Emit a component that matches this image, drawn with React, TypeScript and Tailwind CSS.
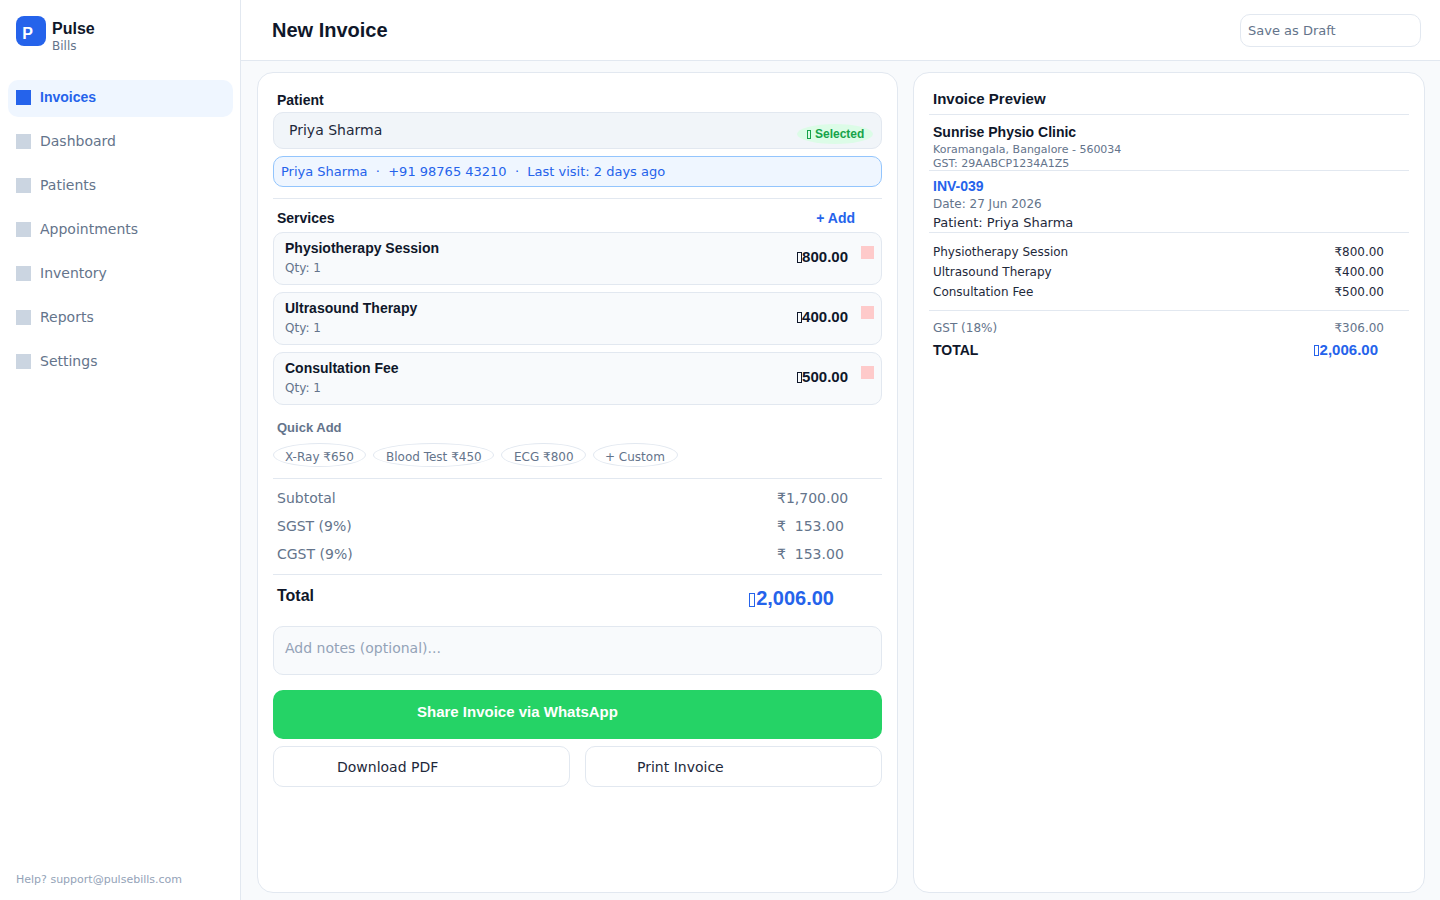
const dejavu = "font-['DejaVu_Sans',sans-serif]";
const strong = "font-['Liberation_Sans',sans-serif] font-bold";

const navItems = ["Invoices", "Dashboard", "Patients", "Appointments", "Inventory", "Reports", "Settings"];
const services = [
  { name: "Physiotherapy Session", price: "800.00" },
  { name: "Ultrasound Therapy", price: "400.00" },
  { name: "Consultation Fee", price: "500.00" },
];
const chips = [
  { label: "X-Ray ₹650", w: "w-[93px] pl-[11px]" },
  { label: "Blood Test ₹450", w: "w-[121px] pl-[12px]" },
  { label: "ECG ₹800", w: "w-[85px] pl-[12px]" },
  { label: "+ Custom", w: "w-[85px] pl-[11px]" },
];
const taxes = [
  { label: "Subtotal", value: "₹1,700.00" },
  { label: "SGST (9%)", value: "₹  153.00" },
  { label: "CGST (9%)", value: "₹  153.00" },
];

// the bold face has no rupee glyph in the reference, it shows an empty box
function MissingGlyph({ className }: { className: string }) {
  return <span role="img" aria-label="₹" className={`inline-block border border-current ${className}`} />;
}

function Sidebar() {
  return (
    <aside className="w-[241px] shrink-0 h-[900px] bg-white border-r border-[#e2e8f0] flex flex-col">
      <div className="flex gap-[6px] pl-4 pt-4 h-[80px]">
        <div className="w-[30px] h-[30px] rounded-lg bg-[#2563eb] flex items-center justify-center pt-[5px] pr-[7px]">
          <span className={`${strong} text-white text-[16px] leading-none`}>P</span>
        </div>
        <div className="flex flex-col">
          <span className={`${strong} text-[16px] leading-[20px] mt-[3px] text-[#0f172a]`}>Pulse</span>
          <span className="text-[12px] leading-[14px] text-[#64748b] mt-0">Bills</span>
        </div>
      </div>
      <nav className="flex flex-col gap-[7px] pl-2 pr-[7px]">
        {navItems.map((item, i) => (
          <div
            key={item}
            className={`h-[37px] flex items-center gap-[9px] px-2 pb-[2px] rounded-[10px] ${i === 0 ? "bg-[#eff6ff]" : ""}`}
          >
            <div className={`w-[15px] h-[15px] ${i === 0 ? "bg-[#2563eb]" : "bg-[#cbd5e1]"}`} />
            <span className={i === 0 ? `${strong} text-[14px] text-[#2563eb]` : "text-[14px] text-[#64748b]"}>{item}</span>
          </div>
        ))}
      </nav>
      <div className="mt-auto pl-4 pb-[12px] text-[11px] leading-[16px] text-[#94a3b8]">Help? support@pulsebills.com</div>
    </aside>
  );
}

function Header() {
  return (
    <header className="h-[61px] shrink-0 bg-white border-b border-[#e2e8f0] flex items-center justify-between pl-[31px] pr-[19px]">
      <h1 className={`${strong} text-[20px] text-[#0f172a]`}>New Invoice</h1>
      <div className="w-[181px] h-[33px] rounded-[10px] border border-[#e2e8f0] bg-white flex items-center pl-[7px] pt-px text-[13px] text-[#64748b]">
        Save as Draft
      </div>
    </header>
  );
}

function ServiceRow({ name, price }: { name: string; price: string }) {
  return (
    <div className="h-[53px] rounded-[10px] border border-[#e2e8f0] bg-[#f8fafc] flex justify-between pl-[11px] pr-[7px]">
      <div className="flex flex-col">
        <span className={`${strong} text-[14px] leading-[20px] mt-[5px] text-[#0f172a]`}>{name}</span>
        <span className="text-[12px] leading-[16px] mt-[2px] text-[#64748b]">Qty: 1</span>
      </div>
      <div className="flex items-start gap-[13px]">
        <span className={`${strong} text-[15px] leading-[20px] mt-[14px] text-[#0f172a]`}>
          <MissingGlyph className="w-[5px] h-[11px] align-[-1px]" />
          {price}
        </span>
        <div className="w-[13px] h-[13px] mt-[13px] bg-[#fecaca]" />
      </div>
    </div>
  );
}

function InvoiceForm() {
  return (
    <section className="w-[641px] h-[821px] shrink-0 bg-white rounded-2xl border border-[#e2e8f0] pl-[15px] pr-[15px] flex flex-col">
      <div className={`${strong} text-[14px] leading-[20px] mt-[17px] pl-1 text-[#0f172a]`}>Patient</div>
      <div className="relative h-[37px] mt-[2px] rounded-[10px] border border-[#e2e8f0] bg-[#f1f5f9] pl-[15px] text-[14px] leading-[35px] text-[#1e293b]">
        Priya Sharma
        <span className={`${strong} absolute right-2 top-[11px] w-[76px] h-[20px] rounded-[50%] bg-[#dcfce7] text-[#16a34a] text-[12px] leading-[20px] pl-[10px]`}>
          <MissingGlyph className="w-[4px] h-[9px] mr-[4px] align-[-1px]" />
          Selected
        </span>
      </div>
      <div className="h-[31px] mt-[7px] rounded-[10px] border border-[#93c5fd] bg-[#eff6ff] pl-[7px] text-[13px] leading-[29px] text-[#2563eb] whitespace-pre">
        Priya Sharma  ·  +91 98765 43210  ·  Last visit: 2 days ago
      </div>
      <div className="h-px mt-[11px] bg-[#e2e8f0]" />
      <div className="flex justify-between mt-[9px] pl-1 pr-[27px] h-[20px] items-center">
        <span className={`${strong} text-[14px] text-[#0f172a]`}>Services</span>
        <span className={`${strong} text-[14px] text-[#2563eb]`}>+ Add</span>
      </div>
      <div className="flex flex-col gap-[7px] mt-1">
        {services.map((s) => (
          <ServiceRow key={s.name} name={s.name} price={s.price} />
        ))}
      </div>
      <div className={`${strong} text-[13px] leading-[16px] mt-[15px] pl-1 text-[#64748b]`}>Quick Add</div>
      <div className="flex gap-[7px] mt-[7px]">
        {chips.map((c) => (
          <div
            key={c.label}
            className={`${c.w} h-[24px] rounded-[50%] border border-[#e2e8f0] bg-white text-[12px] leading-[26px] text-[#64748b]`}
          >
            {c.label}
          </div>
        ))}
      </div>
      <div className="h-px mt-[11px] bg-[#e2e8f0]" />
      <div className="flex flex-col mt-[5px]">
        {taxes.map((t) => (
          <div key={t.label} className="h-[28px] flex items-center pl-1 pr-[34px] text-[14px] text-[#64748b]">
            <span>{t.label}</span>
            <span className="ml-auto w-[71px] whitespace-pre">{t.value}</span>
          </div>
        ))}
      </div>
      <div className="h-px mt-[6px] bg-[#e2e8f0]" />
      <div className="flex justify-between pl-1 pr-[48px] h-[51px]">
        <span className={`${strong} text-[16px] leading-[20px] mt-[11px] text-[#0f172a]`}>Total</span>
        <span className={`${strong} text-[20px] leading-[24px] mt-[11px] text-[#2563eb]`}>
          <MissingGlyph className="w-[6px] h-[14px] mr-px align-[-2px]" />
          2,006.00
        </span>
      </div>
      <div className="h-[49px] rounded-[10px] border border-[#e2e8f0] bg-[#f8fafc] pl-[11px] text-[14px] leading-[43px] text-[#94a3b8]">
        Add notes (optional)...
      </div>
      <div className={`${strong} h-[49px] mt-[15px] rounded-[10px] bg-[#25d366] pl-[144px] text-[15px] leading-[44px] text-white`}>
        Share Invoice via WhatsApp
      </div>
      <div className="flex gap-[15px] mt-[7px]">
        <div className="w-[297px] h-[41px] rounded-[10px] border border-[#e2e8f0] bg-white pl-[63px] text-[14px] leading-[40px] text-[#1e293b]">
          Download PDF
        </div>
        <div className="w-[297px] h-[41px] rounded-[10px] border border-[#e2e8f0] bg-white pl-[51px] text-[14px] leading-[40px] text-[#1e293b]">
          Print Invoice
        </div>
      </div>
    </section>
  );
}

function LineItem({ label, value }: { label: string; value: string }) {
  return (
    <div className="h-[20px] flex justify-between items-center pl-1 pr-[25px] text-[12px] text-[#1e293b]">
      <span>{label}</span>
      <span>{value}</span>
    </div>
  );
}

function InvoicePreview() {
  return (
    <section className="w-[512px] h-[821px] shrink-0 bg-white rounded-2xl border border-[#e2e8f0] pl-[15px] pr-[15px] flex flex-col">
      <div className={`${strong} text-[15px] leading-[20px] mt-4 pl-1 text-[#0f172a]`}>Invoice Preview</div>
      <div className="h-px mt-[5px] bg-[#e2e8f0]" />
      <div className={`${strong} text-[14px] leading-[20px] mt-[7px] pl-1 text-[#0f172a]`}>Sunrise Physio Clinic</div>
      <div className="text-[11px] leading-[14px] mt-[1px] pl-1 text-[#64748b]">Koramangala, Bangalore - 560034</div>
      <div className="text-[11px] leading-[13px] pl-1 text-[#64748b]">GST: 29AABCP1234A1Z5</div>
      <div className="h-px bg-[#e2e8f0]" />
      <div className={`${strong} text-[14px] leading-[18px] mt-[6px] pl-1 text-[#2563eb]`}>INV-039</div>
      <div className="text-[12px] leading-[16px] mt-[1px] pl-1 text-[#64748b]">Date: 27 Jun 2026</div>
      <div className="text-[13px] leading-[18px] mt-[2px] pl-1 text-[#1e293b]">Patient: Priya Sharma</div>
      <div className="h-px bg-[#e2e8f0]" />
      <div className="flex flex-col mt-[9px]">
        <LineItem label="Physiotherapy Session" value="₹800.00" />
        <LineItem label="Ultrasound Therapy" value="₹400.00" />
        <LineItem label="Consultation Fee" value="₹500.00" />
      </div>
      <div className="h-px mt-[8px] bg-[#e2e8f0]" />
      <div className="h-[20px] mt-[7px] flex justify-between items-center pl-1 pr-[25px] text-[12px] text-[#64748b]">
        <span>GST (18%)</span>
        <span>₹306.00</span>
      </div>
      <div className="flex justify-between items-center h-[20px] mt-[2px] pl-1 pr-[31px]">
        <span className={`${strong} text-[14px] text-[#0f172a]`}>TOTAL</span>
        <span className={`${strong} text-[15px] pt-px text-[#2563eb]`}>
          <MissingGlyph className="w-[5px] h-[11px] mr-px align-[-1px]" />
          2,006.00
        </span>
      </div>
    </section>
  );
}

export default function App() {
  return (
    <div className={`${dejavu} w-[1440px] h-[900px] flex overflow-hidden bg-[#f8fafc]`}>
      <Sidebar />
      <main className="flex-1 min-w-0 flex flex-col">
        <Header />
        <div className="flex gap-[15px] pl-4 pt-[11px]">
          <InvoiceForm />
          <InvoicePreview />
        </div>
      </main>
    </div>
  );
}
